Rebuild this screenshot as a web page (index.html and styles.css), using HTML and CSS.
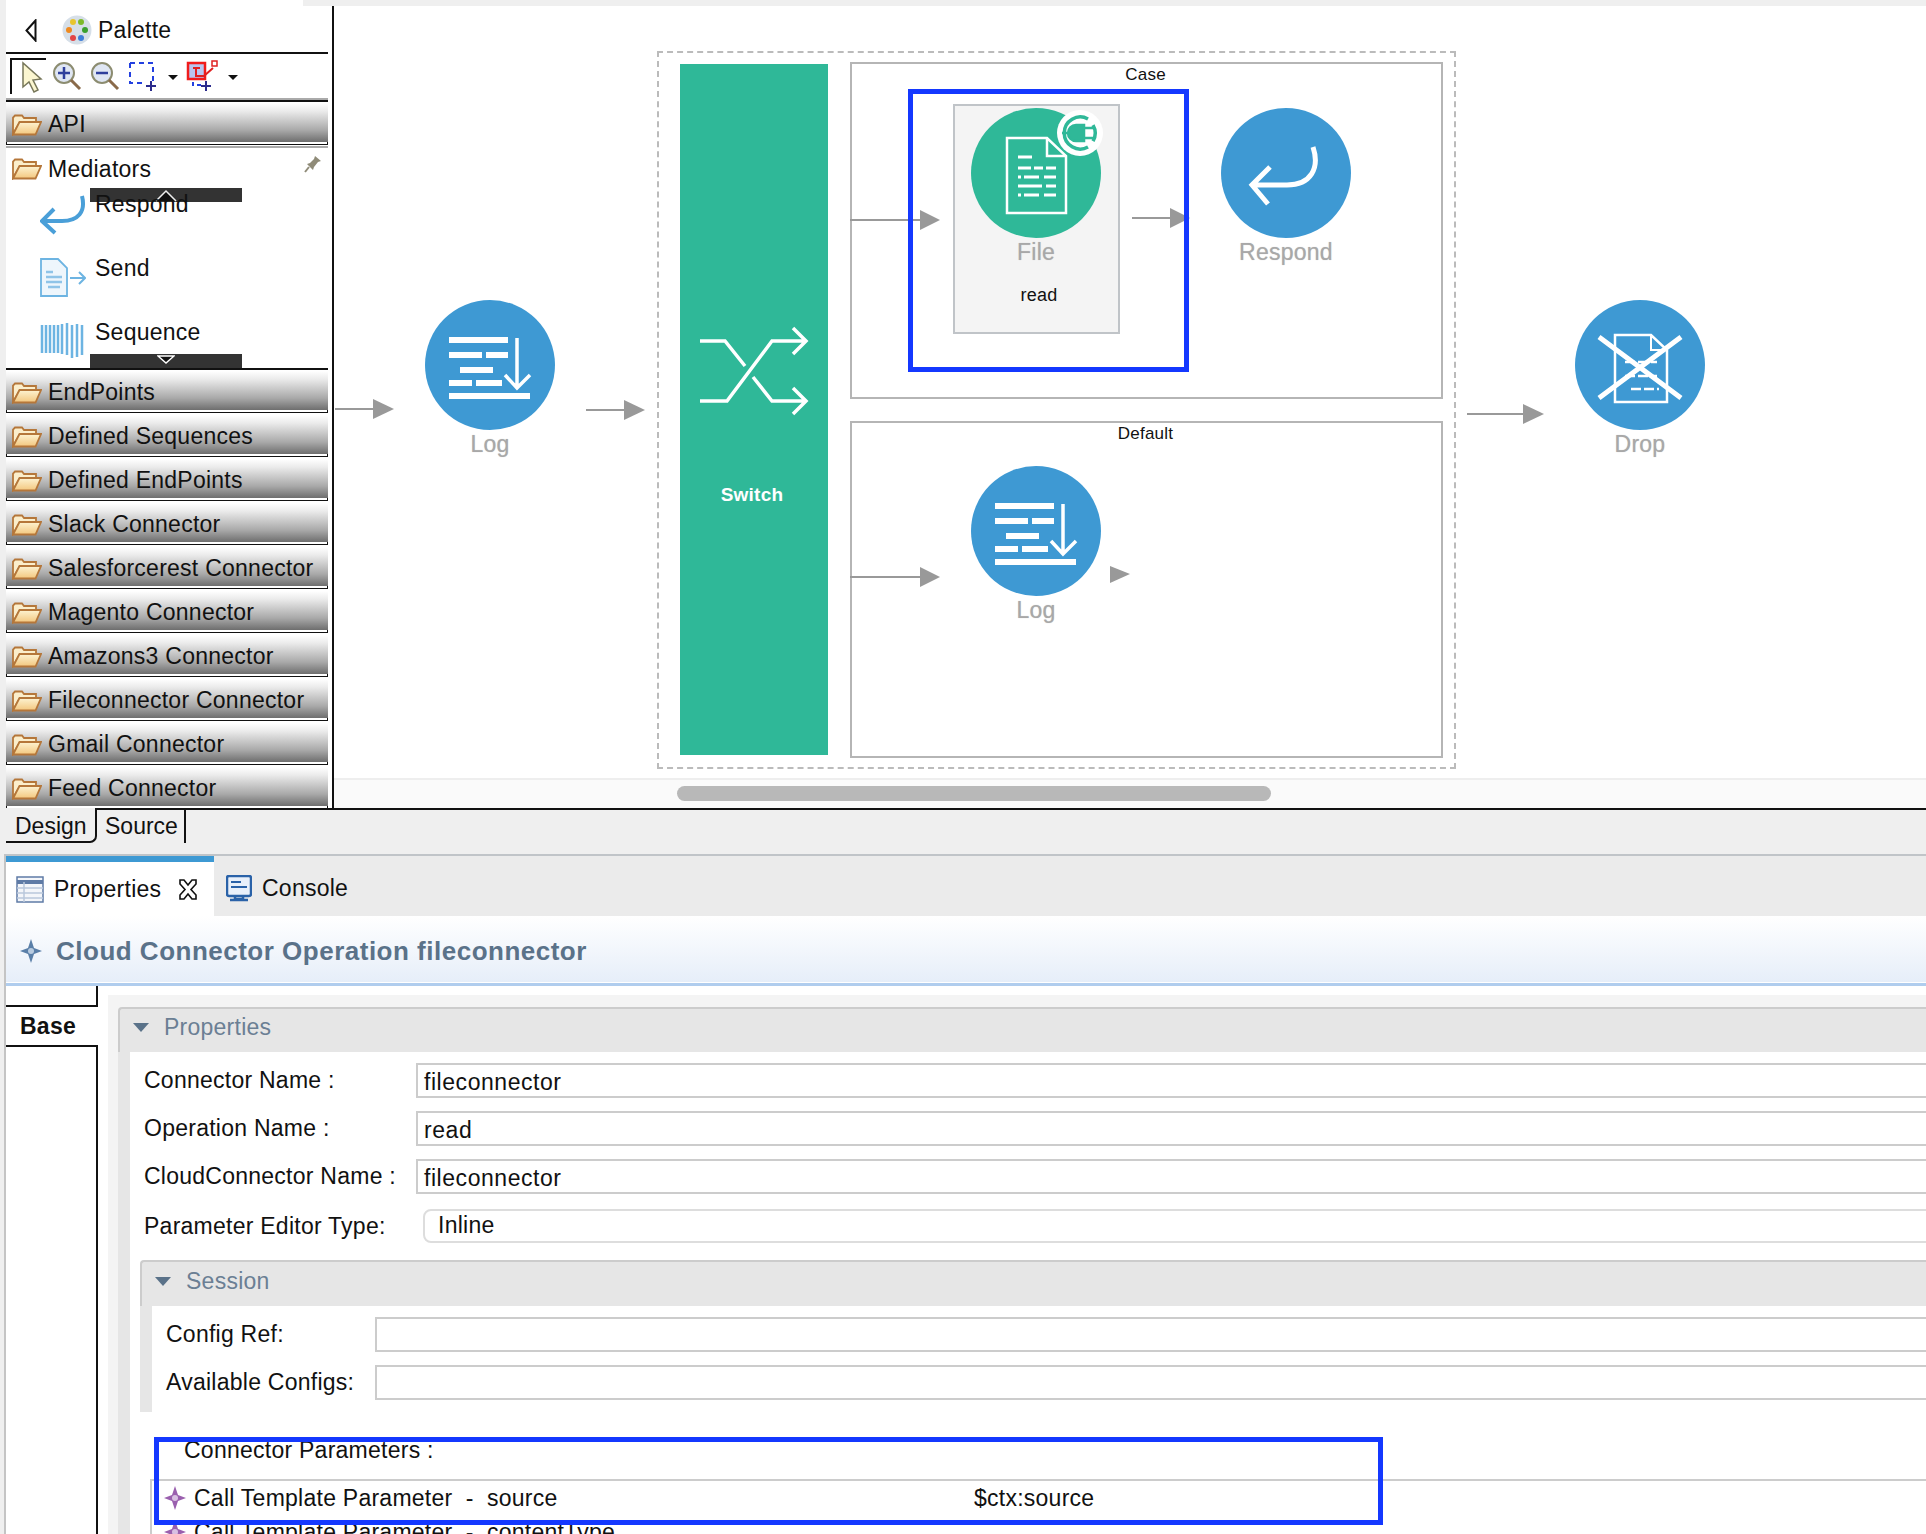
FILE: index.html
```html
<!DOCTYPE html>
<html lang="en">
<head>
    <meta charset="UTF-8">
    <title>Cloud Connector Operation</title>
    <link rel="stylesheet" href="styles.css">
</head>
<body>
    <svg class="defs" width="0" height="0">
        <defs>
            <linearGradient id="folder-fill" x1="0" y1="0" x2="0" y2="1">
                <stop offset="0" stop-color="#fdf3d2"/>
                <stop offset="1" stop-color="#f3c77e"/>
            </linearGradient>
            <symbol id="folder" viewBox="0 0 30 22">
                <path d="M1 20V3.5L3 1.500H10L12 4H24V8H8L1 20Z" fill="#fbeecb" stroke="#b5773a" stroke-width="1.800"/>
                <path d="M1 20.500L7.500 8H29L23.500 20.500Z" fill="url(#folder-fill)" stroke="#b5773a" stroke-width="1.800"/>
            </symbol>
            <symbol id="log-icon" viewBox="0 0 130 130">
                <path d="M24 40H83M24 55H57M61 55H83M35 70H68M24 83H47M51 83H77M24 96H105" stroke="#fff" stroke-width="6" fill="none"/>
                <path d="M92 38V88M80 75L92 88L105 75" stroke="#fff" stroke-width="3.500" fill="none"/>
            </symbol>
        </defs>
    </svg>

    <div class="top-strip"></div>

    <div class="editor">
        <div class="palette">
            <div class="palette-head">
                <svg class="back" width="12" height="23" viewBox="0 0 12 23"><path d="M10.500 1.500L1.500 11.500L10.500 21.500Z" fill="none" stroke="#111" stroke-width="2"/></svg>
                <svg class="palette-logo" width="30" height="30" viewBox="0 0 30 30">
                    <circle cx="15" cy="15" r="14.500" fill="#d6dfe8"/>
                    <circle cx="11" cy="7" r="3" fill="#e8c52e"/><circle cx="19" cy="7" r="3" fill="#7cba2a"/>
                    <circle cx="7" cy="15" r="3" fill="#ef8a1f"/><circle cx="23" cy="15" r="3" fill="#3aa02f"/>
                    <circle cx="11" cy="23" r="3" fill="#e24646"/><circle cx="19" cy="23" r="3" fill="#3f7fd9"/>
                </svg>
                <span>Palette</span>
            </div>
            <div class="palette-tools">
                <span class="tool-selected"></span>
                <svg class="tool-svg" width="240" height="38" viewBox="0 0 240 38">
                    <path d="M13 6V30L19 25L24 35L28 33L23 23L31 22Z" fill="#fbf6d0" stroke="#77775a" stroke-width="1.500"/>
                    <circle cx="54" cy="16" r="10" fill="#dfe6f3" stroke="#8c8c70" stroke-width="2"/>
                    <path d="M48 16H60M54 10V22" stroke="#2f3f9c" stroke-width="2.500"/>
                    <path d="M61 23L70 32" stroke="#8a6a4a" stroke-width="3"/>
                    <circle cx="92" cy="16" r="10" fill="#dfe6f3" stroke="#8c8c70" stroke-width="2"/>
                    <path d="M86 16H98" stroke="#2f3f9c" stroke-width="2.500"/>
                    <path d="M99 23L108 32" stroke="#8a6a4a" stroke-width="3"/>
                    <path d="M120 6H143V24M120 6V26H132" fill="none" stroke="#2340e0" stroke-width="2" stroke-dasharray="5 4"/>
                    <path d="M141 24V34M136 29H146" stroke="#2b2b8c" stroke-width="2"/>
                    <path d="M158 18H168L163 23Z" fill="#111"/>
                    <rect x="178" y="6" width="17" height="16" fill="#b9c5ef" stroke="#f01c1c" stroke-width="2.500"/>
                    <path d="M183 11H190M186 11V19H194L203 11" fill="none" stroke="#e02020" stroke-width="2"/>
                    <rect x="202" y="4" width="5" height="5" fill="#fff" stroke="#e02020" stroke-width="1.500"/>
                    <path d="M183 25V28H192" fill="none" stroke="#2340e0" stroke-width="2" stroke-dasharray="4 3"/>
                    <path d="M196 24V34M191 29H201" stroke="#2b2b8c" stroke-width="2"/>
                    <path d="M218 18H228L223 23Z" fill="#111"/>
                </svg>
            </div>

            <div class="drawer"><svg class="folder"><use href="#folder"/></svg>API</div>

            <div class="drawer-open">
                <div class="drawer-open-head">
                    <svg class="folder"><use href="#folder"/></svg>Mediators
                    <svg class="pin" width="18" height="18" viewBox="0 0 18 18"><path d="M11 1L17 6L14 7L10 12L9 15L3 9L6 8L10 4Z" fill="#8f8b78"/><path d="M5 12L1 17" stroke="#8f8b78" stroke-width="2"/></svg>
                </div>
                <div class="tool-row">
                    <svg width="46" height="42" viewBox="0 0 46 42"><path d="M42 2C46 18 38 27 22 27H3M14 15L2 27L15 39" fill="none" stroke="#4a9fd8" stroke-width="4"/></svg>
                    <span>Respond</span>
                </div>
                <div class="tool-row">
                    <svg width="46" height="40" viewBox="0 0 46 40"><path d="M1 1H18L27 10V38H1Z" fill="#eef6fc" stroke="#6db4e2" stroke-width="1.800"/><path d="M6 14H13M6 19H22M6 24H22M8 29H20" stroke="#8fc4e8" stroke-width="2.500"/><path d="M30 20H45M39 14L45 20L39 26" fill="none" stroke="#6db4e2" stroke-width="2"/></svg>
                    <span>Send</span>
                </div>
                <div class="tool-row">
                    <svg width="46" height="38" viewBox="0 0 46 38"><path d="M2 3V31M6 3V31M10 3V31M14 3V31M18 3V31M22 2V32M27 1V33M32 3V36M37 2V35M42 3V33" stroke="#6db4e2" stroke-width="2.500"/></svg>
                    <span>Sequence</span>
                </div>
                <div class="scroll-up"><svg width="24" height="14" viewBox="0 0 24 14"><path d="M2 13L12 3L22 13" fill="#111" stroke="#eee" stroke-width="1.500"/></svg></div>
                <div class="scroll-down"><svg width="18" height="14" viewBox="0 0 18 14"><path d="M1 2H17L9 9Z" fill="#111" stroke="#fff" stroke-width="1.500"/></svg></div>
            </div>

            <div class="drawer"><svg class="folder"><use href="#folder"/></svg>EndPoints</div>
            <div class="drawer"><svg class="folder"><use href="#folder"/></svg>Defined Sequences</div>
            <div class="drawer"><svg class="folder"><use href="#folder"/></svg>Defined EndPoints</div>
            <div class="drawer"><svg class="folder"><use href="#folder"/></svg>Slack Connector</div>
            <div class="drawer"><svg class="folder"><use href="#folder"/></svg>Salesforcerest Connector</div>
            <div class="drawer"><svg class="folder"><use href="#folder"/></svg>Magento Connector</div>
            <div class="drawer"><svg class="folder"><use href="#folder"/></svg>Amazons3 Connector</div>
            <div class="drawer"><svg class="folder"><use href="#folder"/></svg>Fileconnector Connector</div>
            <div class="drawer"><svg class="folder"><use href="#folder"/></svg>Gmail Connector</div>
            <div class="drawer"><svg class="folder"><use href="#folder"/></svg>Feed Connector</div>
        </div>

        <div class="canvas">
            <div class="sequence-box"></div>
            <div class="switch-block"></div>
            <span class="switch-label">Switch</span>
            <div class="case-box"></div>
            <span class="case-label">Case</span>
            <div class="default-box"></div>
            <span class="default-label">Default</span>
            <div class="connector-card"></div>

            <!-- diagram coordinates below are page x minus 334 -->
            <svg class="wires" width="1592" height="770" viewBox="0 0 1592 770">
                <g stroke="#999" stroke-width="2">
                    <path d="M1 409H41M252 410H291M516 220H588M798 218H838M516 577H588M1133 414H1190"/>
                </g>
                <g fill="#999">
                    <path d="M39 399L60 409L39 419Z"/>
                    <path d="M290 400L311 410L290 420Z"/>
                    <path d="M586 210L606 220L586 230Z"/>
                    <path d="M836 208L856 218L836 228Z"/>
                    <path d="M586 567L606 577L586 587Z"/>
                    <path d="M776 566L796 574L776 583Z"/>
                    <path d="M1189 404L1210 414L1189 424Z"/>
                </g>
                <g stroke="#fff" stroke-width="3.500" fill="none">
                    <path d="M366 341H391L411 366M366 401H393L438 341H471M459 328L472 341L459 354M419 377L438 401H471M459 388L472 401L459 414"/>
                </g>
            </svg>

            <div class="node node-log-a">
                <svg class="circle" width="130" height="130"><use href="#log-icon"/></svg>
                <span class="node-name">Log</span>
            </div>

            <div class="node node-file">
                <svg class="circle green" width="130" height="130" viewBox="0 0 130 130">
                    <path d="M36 30H76L95 48V105H36Z" fill="none" stroke="#fff" stroke-width="2.500"/>
                    <path d="M76 30V48H95" fill="none" stroke="#fff" stroke-width="2.500"/>
                    <path d="M47 49H61M47 60H60M63 60H72M75 60H85M47 69H50M53 69H68M73 69H85M47 78H71M75 78H85M47 87H50M53 87H68M73 87H85" stroke="#fff" stroke-width="3"/>
                </svg>
                <span class="node-name">File</span>
                <svg class="plug" width="46" height="46" viewBox="0 0 46 46">
                    <circle cx="23" cy="23" r="23" fill="#fff"/>
                    <path d="M31 9A16 16 0 1 0 31 37" fill="none" stroke="#2fb898" stroke-width="3.500"/>
                    <path d="M36 15A16 16 0 0 1 36 31" fill="none" stroke="#2fb898" stroke-width="3.500"/>
                    <path d="M19 15H27V31H19A8 8 0 0 1 19 15ZM11 23H5M27 18H36M27 28H36" fill="#2fb898" stroke="#2fb898" stroke-width="2.500"/>
                </svg>
            </div>
            <span class="node-sub">read</span>

            <div class="node node-respond">
                <svg class="circle" width="130" height="130" viewBox="0 0 130 130">
                    <path d="M92 39C99 60 90 77 66 77H33M49 59L31 77L47 96" fill="none" stroke="#fff" stroke-width="5"/>
                </svg>
                <span class="node-name">Respond</span>
            </div>

            <div class="node node-log-b">
                <svg class="circle" width="130" height="130"><use href="#log-icon"/></svg>
                <span class="node-name">Log</span>
            </div>

            <div class="node node-drop">
                <svg class="circle" width="130" height="130" viewBox="0 0 130 130">
                    <path d="M40 35H76L92 50V102H40Z" fill="none" stroke="#fff" stroke-width="2.500"/>
                    <path d="M76 35V50H92" fill="none" stroke="#fff" stroke-width="2"/>
                    <path d="M50 62H82M50 76H82M56 89H84" stroke="#fff" stroke-width="2.500" stroke-dasharray="10 3"/>
                    <path d="M24 37L106 98M106 37L24 98" stroke="#fff" stroke-width="5"/>
                </svg>
                <span class="node-name">Drop</span>
            </div>

            <div class="canvas-scroll"><div class="canvas-thumb"></div></div>
        </div>
    </div>

    <div class="page-tabs">
        <div class="page-tab design">Design</div>
        <div class="page-tab source">Source</div>
    </div>

    <div class="views">
        <div class="view-tabs">
            <div class="view-tab active">
                <svg width="28" height="27" viewBox="0 0 28 27"><rect x="1" y="1" width="26" height="25" fill="#f4f6fa" stroke="#5f7ba6" stroke-width="1.500"/><path d="M1 6H27" stroke="#5f7ba6" stroke-width="4"/><path d="M1 12H27M1 17H27M1 22H27M8 6V26" stroke="#b9c8dc" stroke-width="1.500"/></svg>
                <span>Properties</span>
                <svg class="close" width="20" height="21" viewBox="0 0 20 21"><path d="M2 1H6L10 6L14 1H18V5L13 10.500L18 16V20H14L10 15L6 20H2V16L7 10.500L2 5Z" fill="#fff" stroke="#111" stroke-width="1.600"/></svg>
            </div>
            <div class="view-tab">
                <svg width="26" height="27" viewBox="0 0 26 27"><rect x="1" y="1" width="24" height="20" rx="2" fill="#e9f0fa" stroke="#2a62a8" stroke-width="2.500"/><path d="M5 7H15M5 12H21" stroke="#2a62a8" stroke-width="2"/><path d="M9 21V24H17V21M4 25H22" stroke="#2a62a8" stroke-width="2.500" fill="none"/></svg>
                <span>Console</span>
            </div>
        </div>

        <div class="form-title">
            <svg width="22" height="24" viewBox="0 0 22 24"><path d="M11 0L14 9L22 12L14 15L11 24L8 15L0 12L8 9Z" fill="#5a7fa8"/><circle cx="11" cy="12" r="3" fill="#b8cbe0"/></svg>
            <span>Cloud Connector Operation fileconnector</span>
        </div>

        <div class="form-body">
            <div class="side-tabs">
                <div class="side-top"></div>
                <div class="side-tab">Base</div>
                <div class="side-rest"></div>
            </div>

            <div class="form-wrap">
                <div class="section-head"><i class="twisty"></i>Properties</div>
                <div class="section-body">
                    <div class="field first"><label>Connector Name :</label><div class="input">fileconnector</div></div>
                    <div class="field"><label>Operation Name :</label><div class="input">read</div></div>
                    <div class="field"><label>CloudConnector Name :</label><div class="input">fileconnector</div></div>
                    <div class="field combo-field"><label>Parameter Editor Type:</label><div class="combo">Inline</div></div>

                    <div class="session">
                        <div class="section-head session-head"><i class="twisty"></i>Session</div>
                        <div class="session-body">
                            <div class="session-field"><label>Config Ref:</label><div class="input"></div></div>
                            <div class="session-field"><label>Available Configs:</label><div class="input"></div></div>
                        </div>
                    </div>

                    <div class="params-title">Connector Parameters :</div>
                    <div class="params">
                        <div class="param-row">
                            <svg width="22" height="24" viewBox="0 0 22 24"><path d="M11 0L14 9L22 12L14 15L11 24L8 15L0 12L8 9Z" fill="#9a5fae"/><circle cx="11" cy="12" r="3" fill="#d8bfe2"/></svg>
                            <span class="param-name">Call Template Parameter &nbsp;-&nbsp; source</span>
                            <span class="param-value">$ctx:source</span>
                        </div>
                        <div class="param-row">
                            <svg width="22" height="24" viewBox="0 0 22 24"><path d="M11 0L14 9L22 12L14 15L11 24L8 15L0 12L8 9Z" fill="#9a5fae"/><circle cx="11" cy="12" r="3" fill="#d8bfe2"/></svg>
                            <span class="param-name">Call Template Parameter &nbsp;-&nbsp; contentType</span>
                        </div>
                    </div>
                </div>
            </div>
        </div>
    </div>

    <div class="highlight highlight-params"></div>
</body>
</html>
```

FILE: styles.css
```css
html, body {
    margin: 0;
    padding: 0;
}

body {
    position: relative;
    width: 1926px;
    height: 1534px;
    overflow: hidden;
    background-color: #efefef;
    color: #111;
    font-family: "Liberation Sans", Arial, sans-serif;
    font-size: 23px;
    letter-spacing: 0.25px;
}

.defs {
    position: absolute;
}

.top-strip {
    height: 6px;
    margin-left: 303px;
    background-color: #efefef;
}

body::before {
    content: "";
    position: absolute;
    top: 0;
    left: 6px;
    width: 297px;
    height: 6px;
    background-color: #fff;
}

/* 编辑器 */
.editor {
    display: flex;
    height: 802px;
    background-color: #fff;
    margin-left: 6px;
}

.palette {
    width: 322px;
    flex: none;
    margin-right: 4px;
    overflow: hidden;
}

.palette-head {
    display: flex;
    align-items: center;
    box-sizing: border-box;
    height: 48px;
    padding-top: 2px;
    border-bottom: 2px solid #111;
}

.back {
    margin-left: 19px;
}

.palette-logo {
    margin-left: 25px;
    margin-right: 6px;
}

.palette-tools {
    position: relative;
    box-sizing: border-box;
    height: 48px;
    margin-bottom: 1px;
    border-bottom: 2px solid #111;
    box-shadow: inset 0 -2px 0 #aaa;
}

.tool-selected {
    position: absolute;
    top: 4px;
    left: 4px;
    width: 34px;
    height: 34px;
    border-top: 2px solid #111;
    border-left: 2px solid #111;
}

.tool-svg {
    position: absolute;
    top: 3px;
    left: 4px;
}

.drawer {
    display: flex;
    align-items: center;
    box-sizing: border-box;
    height: 39px;
    padding-top: 4px;
    margin-bottom: 5px;
    background: linear-gradient(#fff, #ececec 20%, #a8a8a8 70%, #6e6e6e);
    box-shadow: 0 3px 0 -1px #fff, 0 3px 0 0 #111;
}

.folder {
    width: 30px;
    height: 22px;
    margin: 0 6px 0 6px;
    flex: none;
}

.drawer-open {
    position: relative;
    box-sizing: border-box;
    height: 224px;
    margin-top: -1px;
    margin-bottom: 1px;
    border-top: 2px solid #aaa;
    border-bottom: 2px solid #111;
}

.drawer-open-head {
    display: flex;
    align-items: center;
    box-sizing: border-box;
    height: 39px;
    padding-top: 3px;
}

.pin {
    position: absolute;
    top: 7px;
    right: 6px;
}

.tool-row {
    position: relative;
    display: flex;
    height: 64px;
    padding-left: 34px;
    z-index: 1;
}

.tool-row span {
    margin-left: 9px;
    margin-top: 3px;
    line-height: 28px;
}

.tool-row svg {
    margin-top: 7px;
}

.scroll-up,
.scroll-down {
    position: absolute;
    left: 84px;
    width: 152px;
    height: 14px;
    background-color: #333;
    text-align: center;
}

.scroll-up {
    top: 40px;
}

.scroll-down {
    bottom: 0;
}

.scroll-up svg,
.scroll-down svg {
    display: block;
    margin: 0 auto;
}

/* 画布 */
.canvas {
    position: relative;
    flex: 1;
    border-left: 2px solid #111;
}

.sequence-box {
    position: absolute;
    left: 323px;
    top: 45px;
    width: 795px;
    height: 714px;
    border: 2px dashed #bbb;
}

.switch-block {
    position: absolute;
    left: 346px;
    top: 58px;
    width: 148px;
    height: 691px;
    background-color: #2fb898;
}

.switch-label {
    position: absolute;
    left: 346px;
    top: 478px;
    width: 144px;
    font-size: 19px;
    font-weight: bold;
    color: #fff;
    text-align: center;
}

.case-box,
.default-box {
    position: absolute;
    left: 516px;
    width: 589px;
    border: 2px solid #b5b5b5;
}

.case-box {
    top: 56px;
    height: 333px;
}

.default-box {
    top: 415px;
    height: 333px;
}

.case-label,
.default-label {
    position: absolute;
    left: 515px;
    width: 593px;
    font-size: 17px;
    text-align: center;
    color: #111;
}

.case-label {
    top: 59px;
}

.default-label {
    top: 418px;
}

.connector-card {
    position: absolute;
    left: 619px;
    top: 98px;
    width: 163px;
    height: 226px;
    background-color: #f4f4f4;
    border: 2px solid #c0c4c8;
}

.wires {
    position: absolute;
    top: -6px;
    left: 0;
}

.node {
    position: absolute;
    width: 130px;
    text-align: center;
}

.circle {
    display: block;
    border-radius: 50%;
    background-color: #3e99d3;
}

.circle.green {
    background-color: #2fb898;
}

.node-name {
    display: block;
    margin-top: -1px;
    color: #a8a8a8;
    font-size: 23px;
    line-height: 30px;
    text-shadow: 0 0 1px #c4c4c4;
}

.node-log-a { left: 91px; top: 294px; }
.node-file { left: 637px; top: 102px; }
.node-respond { left: 887px; top: 102px; }
.node-log-b { left: 637px; top: 460px; }
.node-drop { left: 1241px; top: 294px; }

.plug {
    position: absolute;
    left: 86px;
    top: 2px;
}

.node-sub {
    position: absolute;
    left: 636px;
    top: 279px;
    width: 138px;
    font-size: 18px;
    text-align: center;
}

.canvas-scroll {
    position: absolute;
    left: 0;
    right: 0;
    bottom: 0;
    height: 28px;
    background-color: #fafafa;
    border-top: 2px solid #eee;
}

.canvas-thumb {
    position: absolute;
    left: 343px;
    top: 6px;
    width: 594px;
    height: 15px;
    border-radius: 8px;
    background-color: #b8b8b8;
}

.canvas::after {
    content: "";
    position: absolute;
    left: 574px;
    top: 83px;
    width: 281px;
    height: 283px;
    box-sizing: border-box;
    border: 5px solid #1438ff;
    pointer-events: none;
}

/* 页签 */
.page-tabs {
    position: relative;
    display: flex;
    height: 46px;
    padding-left: 6px;
    letter-spacing: 0;
}

.page-tabs::before {
    content: "";
    position: absolute;
    top: 0;
    left: 95px;
    right: 0;
    height: 2px;
    background-color: #111;
}

.page-tab {
    box-sizing: border-box;
    height: 35px;
    line-height: 36px;
}

.design {
    width: 91px;
    padding-left: 9px;
    border-bottom: 2px solid #111;
    border-right: 2px solid #111;
    border-bottom-right-radius: 7px;
}

.source {
    width: 89px;
    padding-left: 8px;
    border-right: 2px solid #111;
}

/* 属性视图 */
.views {
    margin-left: 4px;
    border-left: 2px solid #c4c4c4;
    border-top: 2px solid #c0c4c8;
    background-color: #fff;
    height: 680px;
}

.view-tabs {
    display: flex;
    height: 60px;
    background-color: #ebebeb;
}

.view-tab {
    display: flex;
    align-items: center;
    box-sizing: border-box;
    height: 54px;
    margin-top: 6px;
    padding-left: 12px;
    padding-bottom: 1px;
}

.view-tab.active {
    width: 208px;
    padding-left: 10px;
    padding-bottom: 0;
    background-color: #fff;
    box-shadow: 0 -6px 0 #3e99d3;
}

.view-tab span {
    margin-left: 10px;
}

.view-tab .close {
    margin-left: 17px;
}

.form-title {
    display: flex;
    align-items: center;
    box-sizing: border-box;
    height: 66px;
    padding: 4px 0 0 14px;
    background: linear-gradient(#fff, #e6eef9);
    color: #5a7289;
    font-size: 26px;
    font-weight: bold;
    letter-spacing: 0.5px;
}

.form-title span {
    margin-left: 14px;
}

.form-body {
    display: flex;
    height: 548px;
    margin-top: 1px;
    border-top: 3px solid #b0cdee;
}

.side-tabs {
    display: flex;
    flex-direction: column;
    width: 92px;
    flex: none;
}

.side-top {
    height: 19px;
    border-right: 2px solid #111;
    border-bottom: 2px solid #111;
}

.side-tab {
    height: 38px;
    padding-left: 14px;
    line-height: 39px;
    font-weight: bold;
}

.side-rest {
    flex: 1;
    border-top: 2px solid #111;
    border-right: 2px solid #111;
}

.form-wrap {
    flex: 1;
    min-width: 0;
    margin: 9px 0 0 10px;
    padding: 12px 0 0 10px;
    background-color: #f4f4f4;
}

.section-head {
    display: flex;
    align-items: center;
    box-sizing: border-box;
    height: 45px;
    padding: 0 0 6px 13px;
    border-top: 2px solid #ccc;
    border-left: 2px solid #ccc;
    border-top-left-radius: 4px;
    background-color: #e6e6e6;
    color: #6b7f94;
}

.session-head {
    height: 46px;
    padding-bottom: 5px;
}

.twisty {
    width: 0;
    height: 0;
    margin-right: 15px;
    border-left: 8px solid transparent;
    border-right: 8px solid transparent;
    border-top: 9px solid #5a7289;
}

.section-body {
    position: relative;
    height: 482px;
    border-left: 12px solid #e6e6e6;
    background-color: #fff;
}

.field {
    display: flex;
    align-items: center;
    padding-left: 14px;
    margin-bottom: 13px;
}

.field.first {
    padding-top: 11px;
}

.field label {
    width: 272px;
    flex: none;
}

.input {
    flex: 1;
    height: 35px;
    margin-right: -8px;
    box-sizing: border-box;
    padding-left: 6px;
    border: 2px solid #ccc;
    background-color: #fff;
    line-height: 34px;
    letter-spacing: 0.55px;
}

.combo-field {
    padding-top: 2px;
    margin-bottom: 17px;
}

.combo {
    flex: 1;
    height: 34px;
    margin-left: 7px;
    margin-right: -8px;
    padding-left: 13px;
    box-sizing: border-box;
    border: 2px solid #ddd;
    border-radius: 8px 0 0 8px;
    line-height: 28px;
}

.session {
    margin-left: 10px;
}

.session-body {
    padding: 11px 0 12px 14px;
    border-left: 12px solid #e6e6e6;
}

.session-field {
    display: flex;
    align-items: center;
    margin-bottom: 13px;
}

.session-field:last-child {
    margin-bottom: 0;
}

.session-field label {
    width: 209px;
    flex: none;
}

.params-title {
    height: 42px;
    margin: 25px 0 0 54px;
    line-height: 26px;
}

.params {
    margin-left: 20px;
    border-top: 2px solid #ccc;
    border-left: 2px solid #ccc;
}

.param-row {
    display: flex;
    align-items: center;
    height: 34px;
    padding-left: 12px;
}

.param-name {
    margin-left: 8px;
    width: 780px;
    flex: none;
    white-space: nowrap;
}

/* 标注框 */
.highlight {
    position: absolute;
    border: 5px solid #1438ff;
    box-sizing: border-box;
    z-index: 2;
}

.highlight-params {
    left: 154px;
    top: 1437px;
    width: 1229px;
    height: 88px;
}
```
